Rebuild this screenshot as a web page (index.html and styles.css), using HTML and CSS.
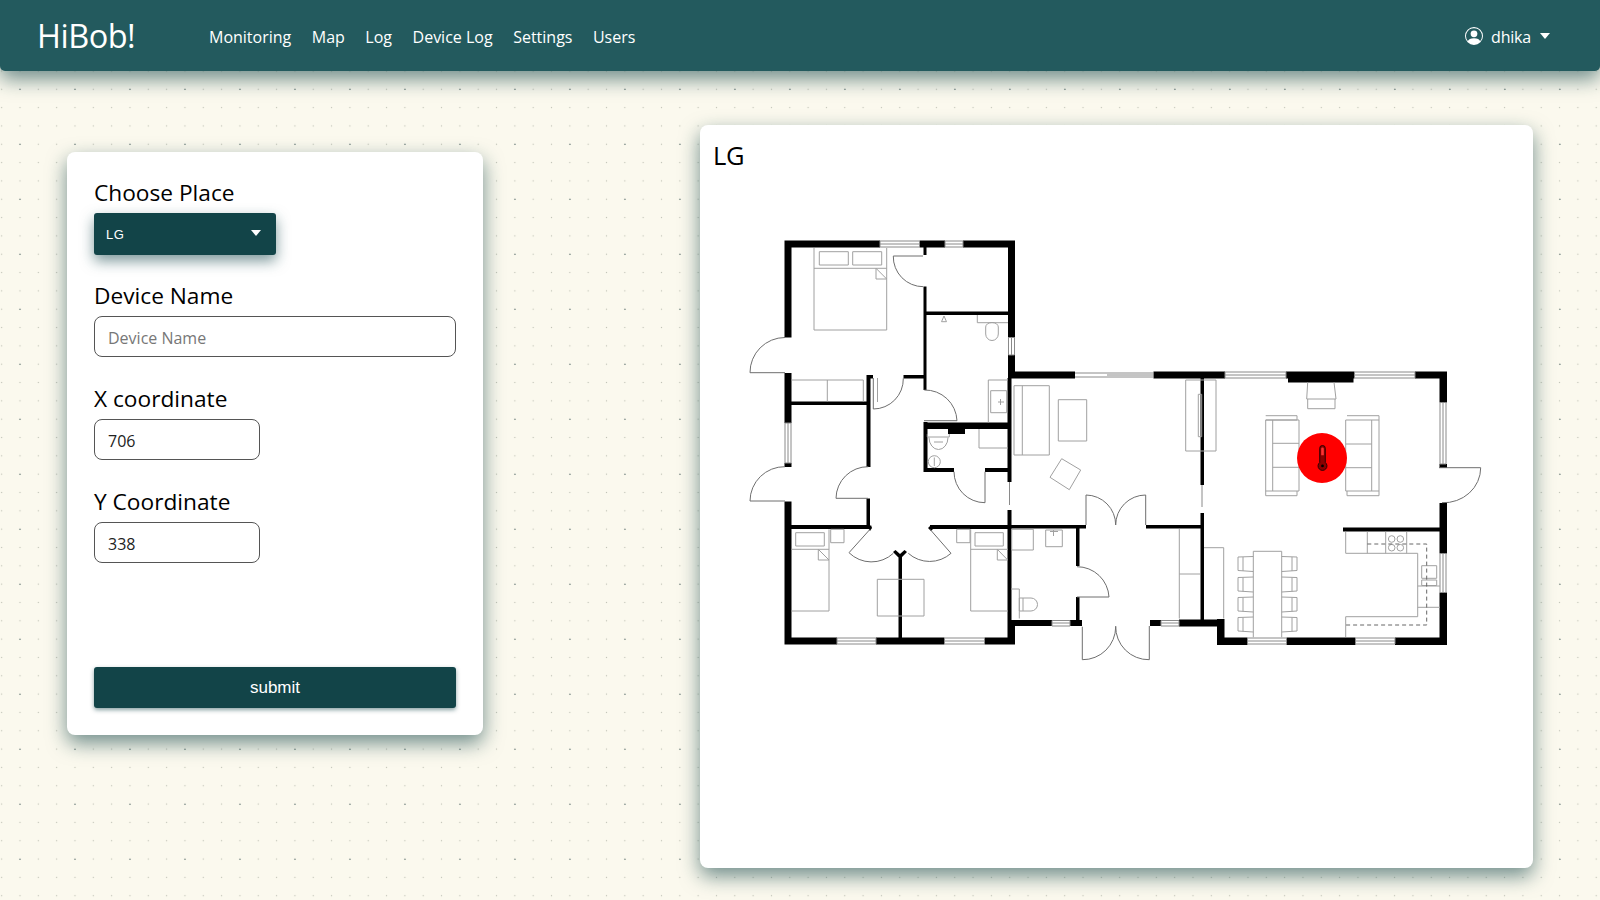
FILE: index.html
```html
<!DOCTYPE html>
<html lang="en">
<head>
<meta charset="utf-8">
<title>HiBob!</title>
<link rel="stylesheet" href="styles.css">
</head>
<body>
<header class="navbar">
  <a class="brand" href="#">HiBob!</a>
  <nav class="nav-links">
    <a href="#">Monitoring</a>
    <a href="#">Map</a>
    <a href="#">Log</a>
    <a href="#">Device Log</a>
    <a href="#">Settings</a>
    <a href="#">Users</a>
  </nav>
  <a class="user" href="#">
    <svg class="user-icon" viewBox="0 0 16 16" aria-hidden="true"><path d="M11 6a3 3 0 1 1-6 0 3 3 0 0 1 6 0z"/><path fill-rule="evenodd" d="M0 8a8 8 0 1 1 16 0A8 8 0 0 1 0 8zm8-7a7 7 0 0 0-5.468 11.37C3.242 11.226 4.805 10 8 10s4.757 1.225 5.468 2.37A7 7 0 0 0 8 1z"/></svg>
    <span class="user-name">dhika</span>
    <i class="caret"></i>
  </a>
</header>
<main class="page">
  <section class="card form-card">
    <form class="form">
      <label class="field-label">Choose Place</label>
      <div class="select"><span>LG</span><i class="caret"></i></div>
      <label class="field-label gap">Device Name</label>
      <input class="input" type="text" placeholder="Device Name">
      <label class="field-label gap">X coordinate</label>
      <input class="input short" type="text" value="706">
      <label class="field-label gap">Y Coordinate</label>
      <input class="input short" type="text" value="338">
      <button class="submit" type="button">submit</button>
    </form>
  </section>
  <section class="card map-card">
    <h2 class="map-title">LG</h2>
    <div class="map">
      <svg class="plan" viewBox="700 181 833 687" aria-hidden="true">
        <path class="wall" d="M784.5 240.5H880V247.5H784.5ZM919.5 240.5H945V247.5H919.5ZM963 240.5H1015V247.5H963ZM784.5 240.5H791.5V337.5H784.5ZM784.5 373H791.5V423H784.5ZM784.5 463H791.5V467H784.5ZM784.5 501.5H791.5V644.5H784.5ZM784.5 637.5H837V644.5H784.5ZM876 637.5H944.5V644.5H876ZM984.5 637.5H1015V644.5H984.5ZM1008 240.5H1015V337.5H1008ZM1008 355H1015V378H1008ZM1007.5 378H1011.5V482H1007.5ZM1007.5 510H1011.5V620H1007.5ZM1007.5 620H1015V644.5H1007.5ZM1008 371.5H1075V378.5H1008ZM1153.5 371.5H1225V378.5H1153.5ZM1286 371.5H1354.5V378.5H1286ZM1288 378H1353.5V382.5H1288ZM1415 371.5H1447V378.5H1415ZM1439.5 371.5H1447V402.5H1439.5ZM1439.5 464H1447V468H1439.5ZM1439.5 503H1447V553.5H1439.5ZM1439.5 592.5H1447V645H1439.5ZM1217 637.5H1247.5V645H1217ZM1286.5 637.5H1355.5V645H1286.5ZM1395 637.5H1447V645H1395ZM1217 619H1224.5V645H1217ZM1179 619.5H1224.5V626.5H1179ZM1200.5 378H1204V485H1200.5ZM1200.5 513H1204V620H1200.5ZM1343 527.5H1440V531.5H1343ZM791.5 525H870V529H791.5ZM930 525H1008V529H930ZM1008 525H1086V528.5H1008ZM1146 525H1201V528.5H1146ZM1076 528H1079.5V566H1076ZM1076 597H1079.5V620H1076ZM1015 620H1052V626H1015ZM1070 620H1082V626H1070ZM1150 620H1161V626H1150ZM923.5 247.5H926.5V255H923.5ZM923.5 286.5H926.5V390H923.5ZM925 311.5H1008V315H925ZM903.5 375H926V378.5H903.5ZM866.5 375H873V378.5H866.5ZM866.5 375H870.5V467H866.5ZM791.5 401.5H867V405H791.5ZM866.5 498.5H870V526H866.5ZM924 422.5H1008V429H924ZM948 427H965V434H948ZM923.5 422H927.5V472H923.5ZM923.5 468H954V472H923.5ZM985 468H1008V472H985ZM898.5 556H902V637.5H898.5ZM893 552L895.5 550L900 554L904.5 550L907 552L901 558H899ZM868 528L871 525L872 528L870 531ZM928 528L931 525L933 529L931 531Z"/>
        <g class="win">
          <path d="M880 241H919.5V247H880ZM880 244H919.5M945 241H963V247H945ZM945 244H963M785 423H791V463H785ZM788 423V463M837 638H876V644H837ZM837 641H876M944.5 638H984.5V644H944.5ZM944.5 641H984.5M1008.5 337.5H1014.5V355H1008.5ZM1011.5 337.5V355M1075 373H1153.5M1075 377H1153.5M1107 375H1153.5M1225 372H1286V378H1225ZM1225 375H1286M1354.5 372H1415V378H1354.5ZM1354.5 375H1415M1440 402.5H1446V464H1440ZM1443 402.5V464M1440 553.5H1446V592.5H1440ZM1443 553.5V592.5M1247.5 638H1286.5V644H1247.5ZM1247.5 641H1286.5M1355.5 638H1395V644H1355.5ZM1355.5 641H1395M1052 620.5H1070V626H1052ZM1052 623H1070M1161 620.5H1179V626H1161ZM1161 623H1179M1009.5 482V505M1202 485V507"/>
        </g>
        <g class="door">
          <path d="M785 337.5A35 35 0 0 0 750 372.7H785M785 466.7A34.5 34.5 0 0 0 750 501H785M893.3 256H923M893.3 256A30 30 0 0 0 923.3 286.7M903.3 378.3A30 30 0 0 1 873.3 409V378M924.3 390A32 32 0 0 1 957 420.7H924M954 471.7A31 31 0 0 0 985 502.7V471.7M868.3 466.7A32 32 0 0 0 836 498.3H868M870 529.3L849 552.7A32 32 0 0 0 893.3 553.3M930 529.3L951 553.3A32 32 0 0 1 908.3 553.3M1077 566.7A32 32 0 0 1 1109 597H1077M1086 525V495A30 30 0 0 1 1115.7 525M1145.7 525V495A30 30 0 0 0 1115.7 525M1082.3 626.7V659.7A33 33 0 0 0 1115.7 626.7M1149.3 626V659.7A33 33 0 0 1 1115.7 626M1439 467.7H1480.7A37 35 0 0 1 1442 502.7"/>
        </g>
        <g class="furn">
          <path d="M814 248V330H886.7V248M814 268.3H886.7M876 268.3L886.7 279H876ZM819.3 251.7H848.3V265H819.3ZM852.7 251.7H881.7V265H852.7ZM791.5 380H863.3V401.5M827.3 380V401.5M877.5 378V402M977.3 315V322.7H1008M985.7 327A6.3 4.5 0 0 1 998.3 327V334A6.3 6.5 0 0 1 985.7 334ZM944 316L941.5 321.7H946.5ZM988.3 422.5V380H1008M990.7 390.7H1006.7V412.7H990.7ZM998 402H1004M1000.5 399V405M979 429V448H1008M927.3 434V437H949.3V434M929 437.5A9.5 12 0 0 0 948 437.5M934 442H943"/>
          <circle cx="934.3" cy="461.7" r="6"/><path d="M934.3 457.5V466"/>
          <path d="M791.5 611H829V529.3M791.5 549.3H829M818.3 549.3L829 560H818.3ZM795.7 532.7H824.3V546H795.7ZM830.7 529.3H844V542.7H830.7ZM1008 611H970.7V529.3M970.7 549.3H1008M997.3 549.3L1007.7 560H997.3ZM975 532.7H1003.3V546H975ZM956.7 529.3H970V542.7H956.7ZM877.3 579.3H924V616H877.3ZM1011.7 529.3H1033.3V550H1011.7ZM1045.7 530H1062.3V546.7H1045.7ZM1053.5 530V536M1050 531.5H1058M1011 589H1019.3V618.5M1019.3 598H1031A6.5 6.5 0 0 1 1031 611H1019.3ZM1023 598V611"/>
          <path d="M1014 385.7H1049.3V455H1014ZM1022.3 385.7V455M1058.3 399.7H1086.7V441H1058.3ZM1061.7 458.7L1080.7 470L1069.3 489.7L1050 477.3ZM1185.7 380H1216V451H1185.7ZM1198.3 394.3H1201.7V436.7H1198.3ZM1179.3 529V618.5M1179.3 574H1200M1204 547.7H1223.7V618.5"/>
          <path d="M1253.3 637.3V551.3H1281.7V637.3M1253.3 556.5L1238 557V570.5L1253.3 571.5M1243 557V571M1253.3 577L1238 577.5V591L1253.3 592M1243 577.5V591.5M1253.3 597L1238 597.5V611L1253.3 612M1243 597.5V611.5M1253.3 617L1238 617.5V631L1253.3 632M1243 617.5V631.5M1281.7 556.5L1297 557V570.5L1281.7 571.5M1292 557V571M1281.7 577L1297 577.5V591L1281.7 592M1292 577.5V591.5M1281.7 597L1297 597.5V611L1281.7 612M1292 597.5V611.5M1281.7 617L1297 617.5V631L1281.7 632M1292 617.5V631.5"/>
          <path d="M1345.7 531.7V553.3H1417.7V616.7H1345.7V637M1367.3 531.7V553.3M1385.7 531.7V553.3M1406.7 531.7V553.3M1417.7 586H1440M1417.7 607.3H1440M1421.7 565.7H1436.7V578.3H1421.7ZM1421.7 580H1436.7V585.5H1421.7Z"/>
          <circle cx="1391.7" cy="539" r="3.3"/><circle cx="1400.3" cy="539" r="3.3"/><circle cx="1391.7" cy="547.7" r="3.3"/><circle cx="1400.3" cy="547.7" r="3.3"/>
          <path class="dash" d="M1367.3 544H1426.7V625H1345.7"/>
          <path d="M1307.7 382.3L1306.7 399H1336L1334 382.3M1307.7 399V408.7H1335V399"/>
          <path d="M1265.7 420H1299V491H1265.7ZM1265.7 415.7H1297V420H1265.7M1265.7 491V495.7H1297V491M1272.7 420V491M1272.7 443.3H1299M1272.7 467.3H1299M1345.7 420H1379V491H1345.7ZM1347 415.7H1379V420M1347 491V495.7H1379V491M1371.7 420V491M1345.7 444H1371.7M1345.7 467.7H1371.7"/>
        </g>
      </svg>
      <div class="marker">
        <svg class="thermo" viewBox="0 0 14 28" aria-hidden="true">
          <path class="thermo-body" d="M4 3.5a3 3 0 0 1 6 0V18.8a4.8 4.8 0 1 1-6 0Z"/>
          <path class="thermo-inner" d="M5.6 4a1.4 1.4 0 0 1 2.8 0v7h-2.8Z"/>
          <circle class="thermo-dot" cx="7" cy="22.5" r="1.5"/>
        </svg>
      </div>
    </div>
  </section>
</main>
</body>
</html>
```
FILE: styles.css
```css
* { box-sizing: border-box; }
html, body { margin: 0; height: 100%; }
body {
  width: 1600px;
  height: 900px;
  overflow: hidden;
  color: #000;
  font-family: "Open Sans", "Noto Sans", sans-serif;
  background-color: #fbf9ee;
  background-image:
    radial-gradient(circle, #3f5a5c 0, #3f5a5c .6px, transparent 1px),
    radial-gradient(circle, #c0c2b6 0, #c0c2b6 .6px, transparent 1px);
  background-size: 55px 55px, 18.333px 18.333px;
  background-position: -7.5px 6.8px, -7.5px 6.8px;
}
a { color: inherit; text-decoration: none; }

.navbar {
  display: flex;
  align-items: center;
  height: 71px;
  padding: 0 50px 0 37px;
  background: #235a5e;
  color: #fff;
  border-radius: 0 0 5px 5px;
  box-shadow: 0 8px 20px rgba(18, 68, 72, .6);
}
.brand {
  width: 162px;
  font-size: 32.5px;
  font-weight: 400;
  letter-spacing: -.5px;
  white-space: nowrap;
}
.nav-links {
  display: flex;
  gap: 20.5px;
  margin-left: 10px;
  padding-top: 2px;
  font-size: 16px;
}
.user {
  display: flex;
  align-items: center;
  margin-left: auto;
  font-size: 16px;
  letter-spacing: -.2px;
}
.user-name { padding-top: 2px; }
.user-icon { width: 18px; height: 18px; fill: #fff; margin-right: 8px; }
.caret {
  display: block;
  width: 0;
  height: 0;
  border-left: 5px solid transparent;
  border-right: 5px solid transparent;
  border-top: 6px solid currentColor;
}
.user .caret { margin-left: 9px; margin-top: 1px; }

.page {
  display: flex;
  justify-content: space-between;
  align-items: flex-start;
  padding: 0 67px;
}
.card {
  background: #fff;
  border-radius: 8px;
  box-shadow: 0 8px 20px rgba(18, 68, 72, .6);
}
.form-card {
  width: 416px;
  height: 583px;
  margin-top: 81px;
  padding: 27px;
}
.form { display: flex; flex-direction: column; align-items: flex-start; height: 100%; }
.field-label {
  display: block;
  height: 30px;
  margin-bottom: 4px;
  font-size: 22.7px;
  line-height: 28px;
}
.field-label.gap { margin-top: 27px; }
.input + .field-label.gap { margin-top: 28px; }
.select {
  display: flex;
  align-items: center;
  justify-content: space-between;
  width: 182px;
  height: 42px;
  padding: 0 15px 0 12px;
  border-radius: 3px;
  background: #124448;
  color: #fff;
  font-family: "Liberation Sans", sans-serif;
  font-size: 13px;
  letter-spacing: .6px;
  box-shadow: 0 6px 14px rgba(18, 68, 72, .55);
}
.select .caret { margin-top: -3px; }
.input {
  display: block;
  width: 100%;
  height: 41px;
  padding: 2px 13px 0;
  border: 1.5px solid #555;
  border-radius: 8px;
  background: #fff;
  color: #222;
  font-family: "Open Sans", "Noto Sans", sans-serif;
  font-size: 16px;
  outline: none;
}
.input::placeholder { color: #777; opacity: 1; }
.input.short { width: 166px; }
.submit {
  width: 100%;
  height: 41px;
  margin-top: auto;
  border: 0;
  border-radius: 3px;
  background: #124448;
  color: #fff;
  font-family: "Liberation Sans", sans-serif;
  font-size: 17px;
  box-shadow: 0 2px 4px rgba(18, 68, 72, .5);
}

.map-card {
  width: 833px;
  height: 743px;
  margin-top: 54px;
}
.map-title {
  height: 56px;
  margin: 0;
  padding: 14px 0 0 13px;
  font-size: 25.5px;
  line-height: 32px;
  font-weight: 400;
  letter-spacing: -.3px;
}
.map { position: relative; height: 687px; }
.plan { display: block; width: 833px; height: 687px; filter: blur(.3px); }
.wall { fill: #000; }
.win path, .door path, .furn path, .furn circle { fill: none; stroke-width: 1; }
.win path { stroke: #8a8a8a; }
.door path { stroke: #6e6e6e; }
.furn path, .furn circle { stroke: #a0a0a0; }
.furn .dash { stroke: #666; stroke-dasharray: 4 3; }

.marker {
  position: absolute;
  left: 597px;
  top: 252px;
  display: flex;
  align-items: center;
  justify-content: center;
  width: 50px;
  height: 50px;
  border-radius: 50%;
  background: #f00;
}
.thermo { width: 13px; height: 26px; }
.thermo-body { fill: #8a0000; stroke: #200; stroke-width: 1; }
.thermo-inner { fill: #f33; }
.thermo-dot { fill: #000; }
```
